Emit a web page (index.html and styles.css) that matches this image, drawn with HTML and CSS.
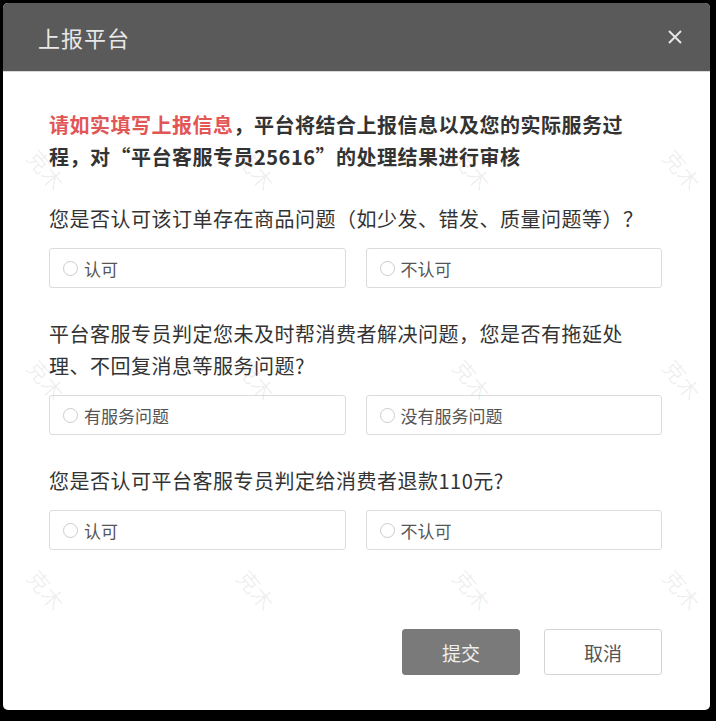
FILE: index.html
```html
<!DOCTYPE html>
<html>

<head>
	<title>上报平台</title>
	<link rel="stylesheet" href="styles.css">
</head>
<body>
	<div class='dialog'>
		<div class='dialog-header'>
			<span class='dialog-title'>上报平台</span>
			<svg class='close' width='16' height='16' viewBox='0 0 16 16'>
				<path d='M2 2 L14 14 M14 2 L2 14' stroke='#e6e6e6' stroke-width='2' fill='none'/>
			</svg>
		</div>
		<div class='dialog-body'>
			<div class='intro'>
				<div><span class='red'>请如实填写上报信息</span><span>，平台将结合上报信息以及您的实际服务过</span></div>
				<div>程，对“平台客服专员25616”的处理结果进行审核</div>
			</div>

			<div class='section'>
				<p class='question'>您是否认可该订单存在商品问题（如少发、错发、质量问题等）？</p>
				<div class='options'>
					<label class='option'><span class='radio'></span>认可</label>
					<label class='option'><span class='radio'></span>不认可</label>
				</div>
			</div>

			<div class='section'>
				<p class='question'>平台客服专员判定您未及时帮消费者解决问题，您是否有拖延处理、不回复消息等服务问题?</p>
				<div class='options'>
					<label class='option'><span class='radio'></span>有服务问题</label>
					<label class='option'><span class='radio'></span>没有服务问题</label>
				</div>
			</div>

			<div class='section'>
				<p class='question'>您是否认可平台客服专员判定给消费者退款110元?</p>
				<div class='options'>
					<label class='option'><span class='radio'></span>认可</label>
					<label class='option'><span class='radio'></span>不认可</label>
				</div>
			</div>
		</div>
		<div class='dialog-footer'>
			<button class='btn btn-primary'>提交</button>
			<button class='btn'>取消</button>
		</div>

		<!-- watermark -->
		<div class='marks'>
			<span class='mark m1'>克木</span>
			<span class='mark m2'>克木</span>
			<span class='mark m3'>克木</span>
			<span class='mark m4'>克木</span>
			<span class='mark m5'>克木</span>
			<span class='mark m6'>克木</span>
			<span class='mark m7'>克木</span>
			<span class='mark m8'>克木</span>
			<span class='mark m9'>克木</span>
			<span class='mark m10'>克木</span>
			<span class='mark m11'>克木</span>
			<span class='mark m12'>克木</span>
		</div>
	</div>
</body>

</html>
```

FILE: styles.css
```css
html, body {
	margin: 0;
	background: #000;
}

body {
	padding: 3px;
	font-family: "Noto Sans CJK SC", "Noto Sans", sans-serif;
}

.dialog {
	position: relative;
	width: 707px;
	height: 707px;
	background: #fff;
	border-radius: 5px;
	overflow: hidden;
	display: flex;
	flex-direction: column;
}

.dialog-header {
	height: 69px;
	background: #5a5a5a;
	display: flex;
	align-items: center;
	justify-content: space-between;
	padding: 0 27px 0 35px;
	border-bottom: 1px solid #d8d8d8;
	box-sizing: border-box;
}

.dialog-title {
	color: #e8e8e8;
	font-size: 22px;
	letter-spacing: 1px;
}

.close {
	display: block;
}

.dialog-body {
	padding: 37px 48px 0 46px;
	flex: 1;
}

p {
	margin: 0;
}

.intro {
	font-size: 20px;
	line-height: 32px;
	font-weight: bold;
	color: #333;
	letter-spacing: 0.5px;
}

.red {
	color: #e25656;
}

.section {
	margin-top: 30px;
}

.question {
	font-size: 20px;
	line-height: 32px;
	color: #333;
	letter-spacing: 0.5px;
	margin-bottom: 13px;
}

.options {
	display: grid;
	grid-template-columns: 1fr 1fr;
	gap: 20px;
}

.option {
	height: 40px;
	box-sizing: border-box;
	border: 1px solid #dcdcdc;
	border-radius: 3px;
	display: flex;
	align-items: center;
	padding-left: 13px;
	font-size: 17px;
	color: #555;
}

.radio {
	width: 13px;
	height: 13px;
	border: 1px solid #ccc;
	border-radius: 50%;
	margin-right: 6px;
}

.dialog-footer {
	display: flex;
	justify-content: flex-end;
	gap: 24px;
	padding: 0 48px 35px 0;
}

.btn {
	width: 118px;
	height: 46px;
	border: 1px solid #d4d4d4;
	border-radius: 3px;
	background: #fff;
	color: #555;
	font-family: "Noto Sans CJK SC", sans-serif;
	font-size: 19px;
}

.btn-primary {
	background: #7a7a7a;
	border-color: #7a7a7a;
	color: #eee;
}

.marks {
	position: absolute;
	left: 0;
	top: 0;
	right: 0;
	bottom: 0;
	pointer-events: none;
}

.mark {
	position: absolute;
	color: rgba(0, 0, 0, 0.07);
	font-size: 22px;
	transform: rotate(50deg);
}

.m1 { left: 22px; top: 150px; }
.m2 { left: 232px; top: 150px; }
.m3 { left: 448px; top: 150px; }
.m4 { left: 658px; top: 150px; }
.m5 { left: 22px; top: 360px; }
.m6 { left: 232px; top: 360px; }
.m7 { left: 448px; top: 360px; }
.m8 { left: 658px; top: 360px; }
.m9 { left: 22px; top: 570px; }
.m10 { left: 232px; top: 570px; }
.m11 { left: 448px; top: 570px; }
.m12 { left: 658px; top: 570px; }
```
